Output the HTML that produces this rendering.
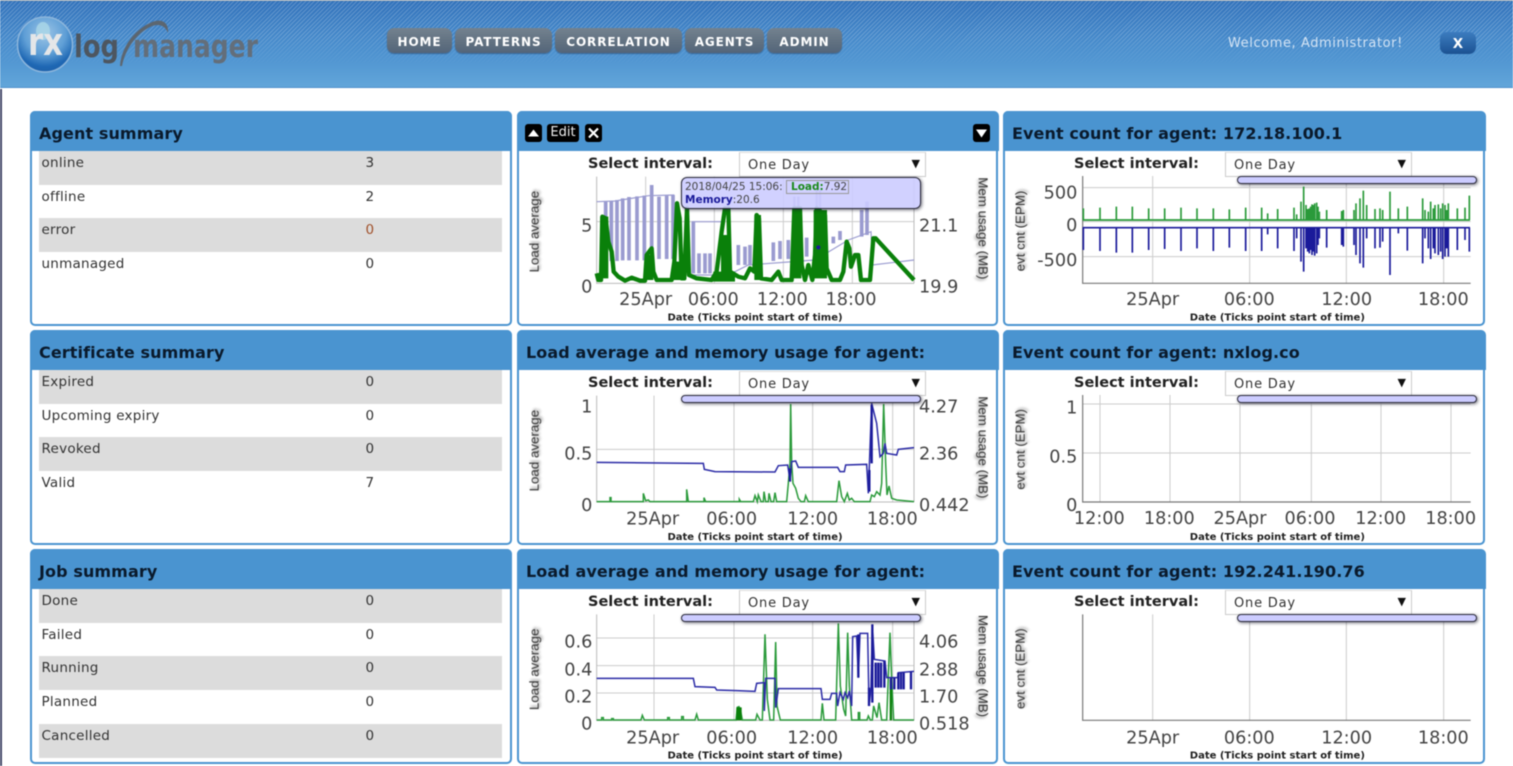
<!DOCTYPE html>
<html><head><meta charset="utf-8"><title>NXLog Manager</title>
<style>
html,body{margin:0;padding:0;background:#fff;overflow:hidden}
#root{position:relative;width:1513px;height:766px;overflow:hidden;background:#fff;font-family:"DejaVu Sans",sans-serif;filter:blur(.4px)}
.abs{position:absolute}
#hdr{position:absolute;left:0;top:0;width:1513px;height:87px;background:linear-gradient(#3272bb,#4a8fce 55%,#62a6da);border-bottom:1.5px solid #4c8fcc}
#hdr:before{content:"";position:absolute;left:0;top:0;right:0;height:1px;background:#9aa7b2}
#stripes{position:absolute;left:0;top:1px;right:0;height:64px;background:repeating-linear-gradient(135deg,rgba(255,255,255,.2) 0 1px,transparent 1px 3px);-webkit-mask-image:linear-gradient(#000 55%,transparent)}
#lb{position:absolute;left:0;top:89px;width:2px;height:677px;background:#444868}
.nav{position:absolute;top:28px;height:25px;line-height:28px;border-radius:7px;background:linear-gradient(#73828f,#607080 60%,#53657a);color:#fff;font-weight:bold;font-size:12px;letter-spacing:.9px;text-align:center;box-shadow:0 1px 1px rgba(30,60,100,.5)}
#wel{position:absolute;left:1228px;top:36px;font-size:13px;letter-spacing:.58px;color:#d3e3f4}
#xb{position:absolute;left:1440px;top:32px;width:36px;height:22px;border-radius:7px;background:linear-gradient(#3c7cc0,#1b5292);color:#fff;font-weight:bold;font-size:13.5px;line-height:24px;text-align:center}
.p{position:absolute;width:481.500px;height:215px;box-sizing:border-box;border:2.5px solid #4a94d0;border-radius:5px;background:#fff}
.h{position:absolute;left:-2.5px;right:-2.5px;top:-2.5px;height:40px;background:#4a94d0;border-radius:5px 5px 0 0;color:#0a1a2c;font-weight:bold;font-size:16px;letter-spacing:.09px;line-height:45px;padding-left:9.500px;white-space:nowrap}
.r{position:absolute;left:6.5px;width:463px;height:33.7px;font-size:13.5px;color:#333;letter-spacing:.25px}
.r.g{background:#dcdcdc}
.r span{position:absolute;top:4px;left:3px;line-height:17px}
.r b{position:absolute;top:4px;left:327px;font-weight:normal;line-height:17px}
.si{position:absolute;font-weight:bold;font-size:14.5px;color:#222;white-space:nowrap;line-height:18px}
.sel{position:absolute;width:187px;height:25px;box-sizing:border-box;border:1px solid #ccc;border-top-color:#ddd;background:#fff;font-size:13px;letter-spacing:.8px;color:#333;line-height:26px;padding-left:8px}
.sel i{position:absolute;right:5px;top:-2px;font-style:normal;font-size:11px;color:#111;letter-spacing:0}
.bar{position:absolute;width:240px;height:8px;box-sizing:border-box;background:#ccccff;border:1.5px solid #2a2a3a;border-radius:5px;box-shadow:1px 1px 3px rgba(20,20,40,.6)}
svg.c{position:absolute;overflow:visible}
svg.c text{font-family:"DejaVu Sans",sans-serif;fill:#444;font-size:53px}
svg.c text.d{font-weight:bold;font-size:30px;fill:#222;text-anchor:middle}
svg.c text.a{font-family:"Liberation Sans",sans-serif;font-size:40px;fill:#333;text-anchor:middle;filter:drop-shadow(5px 4px 4px #888)}
svg.c text.m{text-anchor:middle}
svg.c text.e{text-anchor:end}
.ic{position:absolute;top:124px;height:18px;background:#000;border-radius:3px;color:#eee;font-size:13px;line-height:18px;text-align:center}
#tip{position:absolute;left:681px;top:177px;width:240px;height:32px;box-sizing:border-box;border:1.5px solid #2a2a3a;border-radius:6px;background:rgba(204,204,255,.9);box-shadow:1px 1px 3px rgba(20,20,40,.6);font-size:10.5px;color:#444;line-height:13px;padding:3px 3px}
#tip u{text-decoration:none;border:1px solid #999;padding:0 1px 0 4px;color:#444}
#tip em{font-style:normal;font-weight:bold;color:#1b8a1b}
#tip s{text-decoration:none;font-weight:bold;color:#1a1a9a}
</style></head><body><div id="root">

<div id="hdr"><div id="stripes"></div></div>
<div id="lb"></div>

<svg class="abs" style="left:0;top:0" width="270" height="88" viewBox="0 0 270 88">
<defs>
<radialGradient id="lg" cx=".5" cy=".3" r=".75"><stop offset="0" stop-color="#9cc4e6"/><stop offset=".5" stop-color="#5f9fd6"/><stop offset=".8" stop-color="#1f68b4"/><stop offset="1" stop-color="#1c5da6"/></radialGradient>
</defs>
<circle cx="45" cy="44.500" r="27.500" fill="url(#lg)" stroke="#8db6dc" stroke-width="1.500"/>
<ellipse cx="43" cy="31" rx="7" ry="9" fill="#a9d6e8" opacity=".85"/>
<text x="28" y="55" font-family="DejaVu Sans,sans-serif" font-weight="bold" font-size="38" fill="#e4e6e8" textLength="35" lengthAdjust="spacingAndGlyphs">rx</text>
<text x="74" y="57" font-family="DejaVu Sans,sans-serif" font-weight="bold" font-size="31" fill="#4d5660" textLength="45" lengthAdjust="spacingAndGlyphs">log</text>
<text x="133" y="57" font-family="DejaVu Sans,sans-serif" font-weight="bold" font-size="31" fill="#636e7a" textLength="125" lengthAdjust="spacingAndGlyphs">manager</text>
<path d="M120 66C121 48 134 30 150 23C160 18 169 21 168 33C165 25 158 23 150 27C136 34 125 50 122 66Z" fill="#5c6670"/>
</svg>

<div class="nav" style="left:387px;width:65px">HOME</div>
<div class="nav" style="left:455px;width:97px">PATTERNS</div>
<div class="nav" style="left:555px;width:127px">CORRELATION</div>
<div class="nav" style="left:685px;width:79px">AGENTS</div>
<div class="nav" style="left:767px;width:75px">ADMIN</div>
<div id="wel">Welcome, Administrator!</div>
<div id="xb">X</div>

<!-- left col -->
<div class="p" style="left:30px;top:111px"><div class="h">Agent summary</div>
<div class="r g" style="top:38px"><span>online</span><b>3</b></div>
<div class="r" style="top:71.700px"><span>offline</span><b>2</b></div>
<div class="r g" style="top:105.400px"><span>error</span><b style="color:#a0502a">0</b></div>
<div class="r" style="top:139.100px"><span>unmanaged</span><b>0</b></div>
</div>
<div class="p" style="left:30px;top:330px"><div class="h">Certificate summary</div>
<div class="r g" style="top:38px"><span>Expired</span><b>0</b></div>
<div class="r" style="top:71.700px"><span>Upcoming expiry</span><b>0</b></div>
<div class="r g" style="top:105.400px"><span>Revoked</span><b>0</b></div>
<div class="r" style="top:139.100px"><span>Valid</span><b>7</b></div>
</div>
<div class="p" style="left:30px;top:549px"><div class="h">Job summary</div>
<div class="r g" style="top:38px"><span>Done</span><b>0</b></div>
<div class="r" style="top:71.700px"><span>Failed</span><b>0</b></div>
<div class="r g" style="top:105.400px"><span>Running</span><b>0</b></div>
<div class="r" style="top:139.100px"><span>Planned</span><b>0</b></div>
<div class="r g" style="top:172.800px;height:34px"><span>Cancelled</span><b>0</b></div>
</div>

<!-- middle col -->
<div class="p" style="left:517px;top:111px;width:481px"><div class="h"></div></div>
<div class="ic" style="left:525px;width:17px"><svg width="17" height="18"><path d="M3 12.500L8.500 5.500L14 12.500Z" fill="#fff"/></svg></div>
<div class="ic" style="left:547px;width:32px">Edit</div>
<div class="ic" style="left:585px;width:17px"><svg width="17" height="18"><path d="M4 4.500L13 13.500M13 4.500L4 13.500" stroke="#fff" stroke-width="2.200"/></svg></div>
<div class="ic" style="left:973px;width:17px"><svg width="17" height="18"><path d="M3 5.500L14 5.500L8.500 13.500Z" fill="#fff"/></svg></div>
<div class="p" style="left:517px;top:330px;width:481px"><div class="h">Load average and memory usage for agent:</div></div>
<div class="p" style="left:517px;top:549px;width:481px"><div class="h">Load average and memory usage for agent:</div></div>

<!-- right col -->
<div class="p" style="left:1003px;top:111px;width:482px"><div class="h">Event count for agent: 172.18.100.1</div></div>
<div class="p" style="left:1003px;top:330px;width:482px"><div class="h">Event count for agent: nxlog.co</div></div>
<div class="p" style="left:1003px;top:549px;width:482px"><div class="h">Event count for agent: 192.241.190.76</div></div>

<!-- chart 1 -->
<svg class="c" style="left:515px;top:105px" width="490" height="225" viewBox="0 0 1470 675">
<g stroke="#ccc" stroke-width="3" fill="none"><path d="M245 350H1197M392 215V535M598 215V535M805 215V535M1012 215V535"/><path d="M245 215V535H1197M1197 215V535" stroke="#bbb"/></g>
<g fill="none" stroke="#9a9bd0">
<path stroke-width="3.500" d="M245 290L300 288L400 272L478 270M530 350L620 350M480 466L530 510L640 510L700 480L900 465L1000 405L1068 380L1072 480L1197 465"/>
<path stroke-width="11" d="M272 290V465M289 288V468M306 285V468M323 280V466M342 276V466M366 274V466M388 272V466M410 240V462M432 275V462M455 272V462M474 270V462M535 350V505M552 445V505M570 445V505M585 445V505M670 420V480M690 425V480M705 420V480M775 412V468M795 408V462M820 405V462M875 398V455M955 395V415M975 378V405M1040 315V395M1056 290V390"/>
<path stroke-width="7" d="M838 275V340M850 275V340M905 250V320M915 250V320"/>
</g>
<path fill="none" stroke="#0a800a" stroke-width="13" stroke-linejoin="round" d="M245 505L250 525L258 525L262 335L272 340L280 410L290 440L296 500L310 515L330 527L350 518L375 527L390 527L395 450L410 430L415 500L425 525L470 525L478 470L486 295L494 340L500 520L508 520L516 310L522 510L545 520L590 525L605 500L620 380L630 310L640 310L645 500L670 515L690 520L705 490L718 500L725 330L732 340L738 520L770 525L790 500L800 525L830 525L838 310L855 310L860 480L870 525L880 480L892 525L900 450L905 310L930 330L935 490L950 525L975 525L985 500L995 410L1003 430L1008 485L1020 450L1030 450L1038 525L1065 525L1075 400L1082 400L1197 525"/>
<path fill="#0a800a" d="M618 390H648V520H618ZM718 330H738V525H718ZM833 310H859V520H833ZM896 315H936V520H896ZM256 335H280V520H256ZM474 470H498V525H474ZM390 450H415V525H390ZM595 500H660V530H595Z"/>
<circle cx="910" cy="427" r="6" fill="#1a1a9a"/>
<text class="e" x="232" y="380">5</text><text class="e" x="232" y="563">0</text>
<text x="1212" y="380">21.1</text><text x="1212" y="563">19.9</text>
<text class="m" x="392" y="600">25Apr</text><text class="m" x="595" y="600">06:00</text><text class="m" x="802" y="600">12:00</text><text class="m" x="1008" y="600">18:00</text>
<text class="d" x="720" y="647">Date (Ticks point start of time)</text>
<text class="a" transform="translate(71 380) rotate(-90)">Load average</text>
<text class="a" transform="translate(1391 370) rotate(90)">Mem usage (MB)</text>
</svg>
<div class="si" style="left:588px;top:155px">Select interval:</div>
<div class="sel" style="left:739px;top:152px">One Day<i>▼</i></div>
<div id="tip">2018/04/25 15:06: <u><em>Load:</em>7.92</u><br><s>Memory</s>:20.6</div>

<!-- chart 2 -->
<svg class="c" style="left:515px;top:330px" width="490" height="220" viewBox="0 0 1470 660">
<g stroke="#ccc" stroke-width="3" fill="none"><path d="M245 358H1197M417 197V516M657 197V516M893 197V516M1133 197V516"/><path d="M245 197V516H1197M1197 197V516" stroke="#bbb"/></g>
<path fill="none" stroke="#2a9a3a" stroke-width="4.500" d="M245 515H285V503H288V515H385V490L392 512L400 510L405 515H515V478L520 515H567V503L572 515H673V508L677 515H715L720 497L727 515L730 495L738 515H745L747 485L752 515H760L762 490L768 515H776L780 488L785 515H815L820 460L825 400L827 222L830 400L834 460L842 475L850 505L858 515H868L872 497L880 515H965L972 452L980 500L988 515L997 490L1003 510L1010 505L1018 515H1065L1070 495L1078 500L1085 485L1095 495L1100 460L1106 222L1112 400L1116 495L1122 468L1130 505L1145 510L1197 515"/>
<path fill="none" stroke="#2b2ba6" stroke-width="4.500" d="M245 397L555 400L565 400L568 418L600 425L780 426L790 407L818 405L825 450L830 395L842 393L850 412L968 412L975 425L988 425L992 405L1055 403L1060 490L1070 220L1085 280L1095 380L1105 370L1110 340L1115 370L1145 375L1150 358L1197 353"/>
<path stroke="#1a1a9a" stroke-width="7" d="M825 415V455M1063 420V485M1070 225V400"/>
<text class="e" x="232" y="248">1</text><text class="e" x="232" y="388">0.5</text><text class="e" x="232" y="543">0</text>
<text x="1212" y="248">4.27</text><text x="1212" y="388">2.36</text><text x="1212" y="543">0.442</text>
<text class="m" x="413" y="583">25Apr</text><text class="m" x="650" y="583">06:00</text><text class="m" x="893" y="583">12:00</text><text class="m" x="1132" y="583">18:00</text>
<text class="d" x="720" y="630">Date (Ticks point start of time)</text>
<text class="a" transform="translate(71 362) rotate(-90)">Load average</text>
<text class="a" transform="translate(1391 352) rotate(90)">Mem usage (MB)</text>
</svg>
<div class="si" style="left:588px;top:374px">Select interval:</div>
<div class="sel" style="left:739px;top:371px">One Day<i>▼</i></div>
<div class="bar" style="left:681px;top:395px"></div>

<!-- chart 3 -->
<svg class="c" style="left:515px;top:546px" width="490" height="220" viewBox="0 0 1470 660">
<g stroke="#ccc" stroke-width="3" fill="none"><path d="M245 276H1197M245 359H1197M245 441H1197M417 205V523M657 205V523M893 205V523M1133 205V523"/><path d="M245 205V523H1197M1197 205V523" stroke="#bbb"/></g>
<path fill="none" stroke="#2a9a3a" stroke-width="4.500" d="M245 522H260V515H265V522H290V518H295V522H378L382 508L388 522H458V515H463V522H500V512H505V522H540L545 505L550 522H663L667 484L672 482L676 490L682 522H722L726 505L735 522H742L750 265L757 460L765 522H776L782 288L786 480L796 522H918L922 472L927 522H962L970 232L976 420L986 490L992 510L998 260L1003 420L1010 522H1030V500H1034V522H1056L1060 510L1066 522H1072L1076 480L1086 515L1092 470L1100 522H1115L1125 260L1130 400L1136 522H1197"/>
<path fill="#0a800a" d="M664 484H680V523H664ZM1124 400H1131V523H1124Z"/>
<path fill="none" stroke="#2b2ba6" stroke-width="4.500" d="M245 397L535 397L540 422L600 424L605 432L665 434L720 436L725 412L748 410L748 495L752 397L780 397L782 485L790 428L918 428L922 460L945 460L950 442L965 442L968 480L975 440L985 460L990 440L998 455L1003 435L1010 480L1013 272L1025 270L1030 395L1035 262L1058 262L1062 480L1068 425L1072 235L1078 340L1110 345L1115 395L1148 395L1150 380L1197 376"/>
<path stroke="#1a1a9a" stroke-width="7" fill="none" d="M1030 265V395M1062 425V480M1072 235V470M1082 350V425M1090 350V425M1098 350V425M1108 345V425M1128 395V430M1138 395V430M1150 380V430M1158 380V430M1166 380V430M1188 376V430"/>
<text class="e" x="232" y="305">0.6</text><text class="e" x="232" y="388">0.4</text><text class="e" x="232" y="470">0.2</text><text class="e" x="232" y="550">0</text>
<text x="1212" y="305">4.06</text><text x="1212" y="388">2.88</text><text x="1212" y="470">1.70</text><text x="1212" y="550">0.518</text>
<text class="m" x="413" y="592">25Apr</text><text class="m" x="650" y="592">06:00</text><text class="m" x="893" y="592">12:00</text><text class="m" x="1132" y="592">18:00</text>
<text class="d" x="720" y="638">Date (Ticks point start of time)</text>
<text class="a" transform="translate(71 370) rotate(-90)">Load average</text>
<text class="a" transform="translate(1391 360) rotate(90)">Mem usage (MB)</text>
</svg>
<div class="si" style="left:588px;top:593px">Select interval:</div>
<div class="sel" style="left:739px;top:590px">One Day<i>▼</i></div>
<div class="bar" style="left:681px;top:614px"></div>

<!-- chart 4 -->
<svg class="c" style="left:1000px;top:105px" width="490" height="225" viewBox="0 0 1470 675">
<g stroke="#ccc" stroke-width="3" fill="none"><path d="M248 248H1412M248 350H1412M248 455H1412M458 213V535M749 213V535M1039 213V535M1331 213V535"/></g>
<path d="M248 213V535H1412" fill="none" stroke="#777" stroke-width="3.500"/>
<path fill="none" stroke="#2a9a3a" stroke-width="5" d="M248 345H1410M250 345V310M300 345V308M349 345V305M397 345V305M446 345V310M494 345V310M543 345V308M591 345V310M640 345V310M688 345V313M737 345V308M785 345V308M803 345V325M833 345V312M882 345V308M890 345V328M903 345V290M911 345V245M918 345V300M923 345V312M928 345V310M932 345V305M936 345V298M940 345V300M944 345V295M950 345V293M954 345V305M958 345V320M980 345V315M1025 345V318M1030 345V315M1062 345V315M1068 345V295M1080 345V280M1090 345V257M1100 345V300M1125 345V312M1140 345V310M1148 345V315M1170 345V260M1195 345V310M1222 345V305M1268 345V280M1275 345V315M1285 345V320M1292 345V290M1300 345V310M1305 345V300M1315 345V298M1322 345V310M1328 345V295M1335 345V300M1340 345V315M1345 345V295M1372 345V310M1395 345V308M1408 345V272"/>
<path fill="none" stroke="#1a1a9a" stroke-width="5" d="M248 368H1410M250 368V435M300 368V438M349 368V443M397 368V443M446 368V435M494 368V432M543 368V438M591 368V430M640 368V438M688 368V428M737 368V438M785 368V438M803 368V388M833 368V430M882 368V438M890 368V400M903 368V470M911 368V500M918 368V430M923 368V440M928 368V445M932 368V435M936 368V450M940 368V440M944 368V452M950 368V445M954 368V420M958 368V400M980 368V428M1025 368V420M1030 368V425M1062 368V420M1068 368V450M1080 368V475M1090 368V488M1100 368V400M1125 368V430M1140 368V428M1148 368V410M1170 368V510M1195 368V385M1222 368V437M1268 368V475M1275 368V400M1285 368V430M1292 368V462M1300 368V430M1305 368V445M1315 368V450M1322 368V440M1328 368V462M1335 368V455M1340 368V430M1345 368V455M1372 368V435M1395 368V405M1408 368V440"/>
<text class="e" x="232" y="280">500</text><text class="e" x="232" y="378">0</text><text class="e" x="232" y="483">-500</text>
<text class="m" x="458" y="600">25Apr</text><text class="m" x="748" y="600">06:00</text><text class="m" x="1040" y="600">12:00</text><text class="m" x="1330" y="600">18:00</text>
<text class="d" x="832" y="647">Date (Ticks point start of time)</text>
<text class="a" transform="translate(74 378) rotate(-90)">evt cnt (EPM)</text>
</svg>
<div class="si" style="left:1074px;top:155px">Select interval:</div>
<div class="sel" style="left:1225px;top:152px">One Day<i>▼</i></div>
<div class="bar" style="left:1237px;top:176px"></div>

<!-- chart 5 -->
<svg class="c" style="left:1000px;top:330px" width="490" height="220" viewBox="0 0 1470 660">
<g stroke="#ccc" stroke-width="3" fill="none"><path d="M248 222H1412M248 369H1412M300 195V516M510 195V516M720 195V516M934 195V516M1143 195V516M1353 195V516"/></g>
<path d="M248 195V516H1412" fill="none" stroke="#777" stroke-width="3.500"/>
<text class="e" x="232" y="250">1</text><text class="e" x="232" y="397">0.5</text><text class="e" x="232" y="543">0</text>
<text class="m" x="298" y="582">12:00</text><text class="m" x="508" y="582">18:00</text><text class="m" x="720" y="582">25Apr</text><text class="m" x="930" y="582">06:00</text><text class="m" x="1142" y="582">12:00</text><text class="m" x="1352" y="582">18:00</text>
<text class="d" x="832" y="630">Date (Ticks point start of time)</text>
<text class="a" transform="translate(74 358) rotate(-90)">evt cnt (EPM)</text>
</svg>
<div class="si" style="left:1074px;top:374px">Select interval:</div>
<div class="sel" style="left:1225px;top:371px">One Day<i>▼</i></div>
<div class="bar" style="left:1237px;top:395px"></div>

<!-- chart 6 -->
<svg class="c" style="left:1000px;top:546px" width="490" height="220" viewBox="0 0 1470 660">
<g stroke="#ccc" stroke-width="3" fill="none"><path d="M458 205V523M749 205V523M1039 205V523M1331 205V523"/></g>
<path d="M248 205V523H1412" fill="none" stroke="#777" stroke-width="3.500"/>
<text class="m" x="458" y="592">25Apr</text><text class="m" x="748" y="592">06:00</text><text class="m" x="1040" y="592">12:00</text><text class="m" x="1330" y="592">18:00</text>
<text class="d" x="832" y="638">Date (Ticks point start of time)</text>
<text class="a" transform="translate(74 368) rotate(-90)">evt cnt (EPM)</text>
</svg>
<div class="si" style="left:1074px;top:593px">Select interval:</div>
<div class="sel" style="left:1225px;top:590px">One Day<i>▼</i></div>
<div class="bar" style="left:1237px;top:614px"></div>

</div></body></html>
